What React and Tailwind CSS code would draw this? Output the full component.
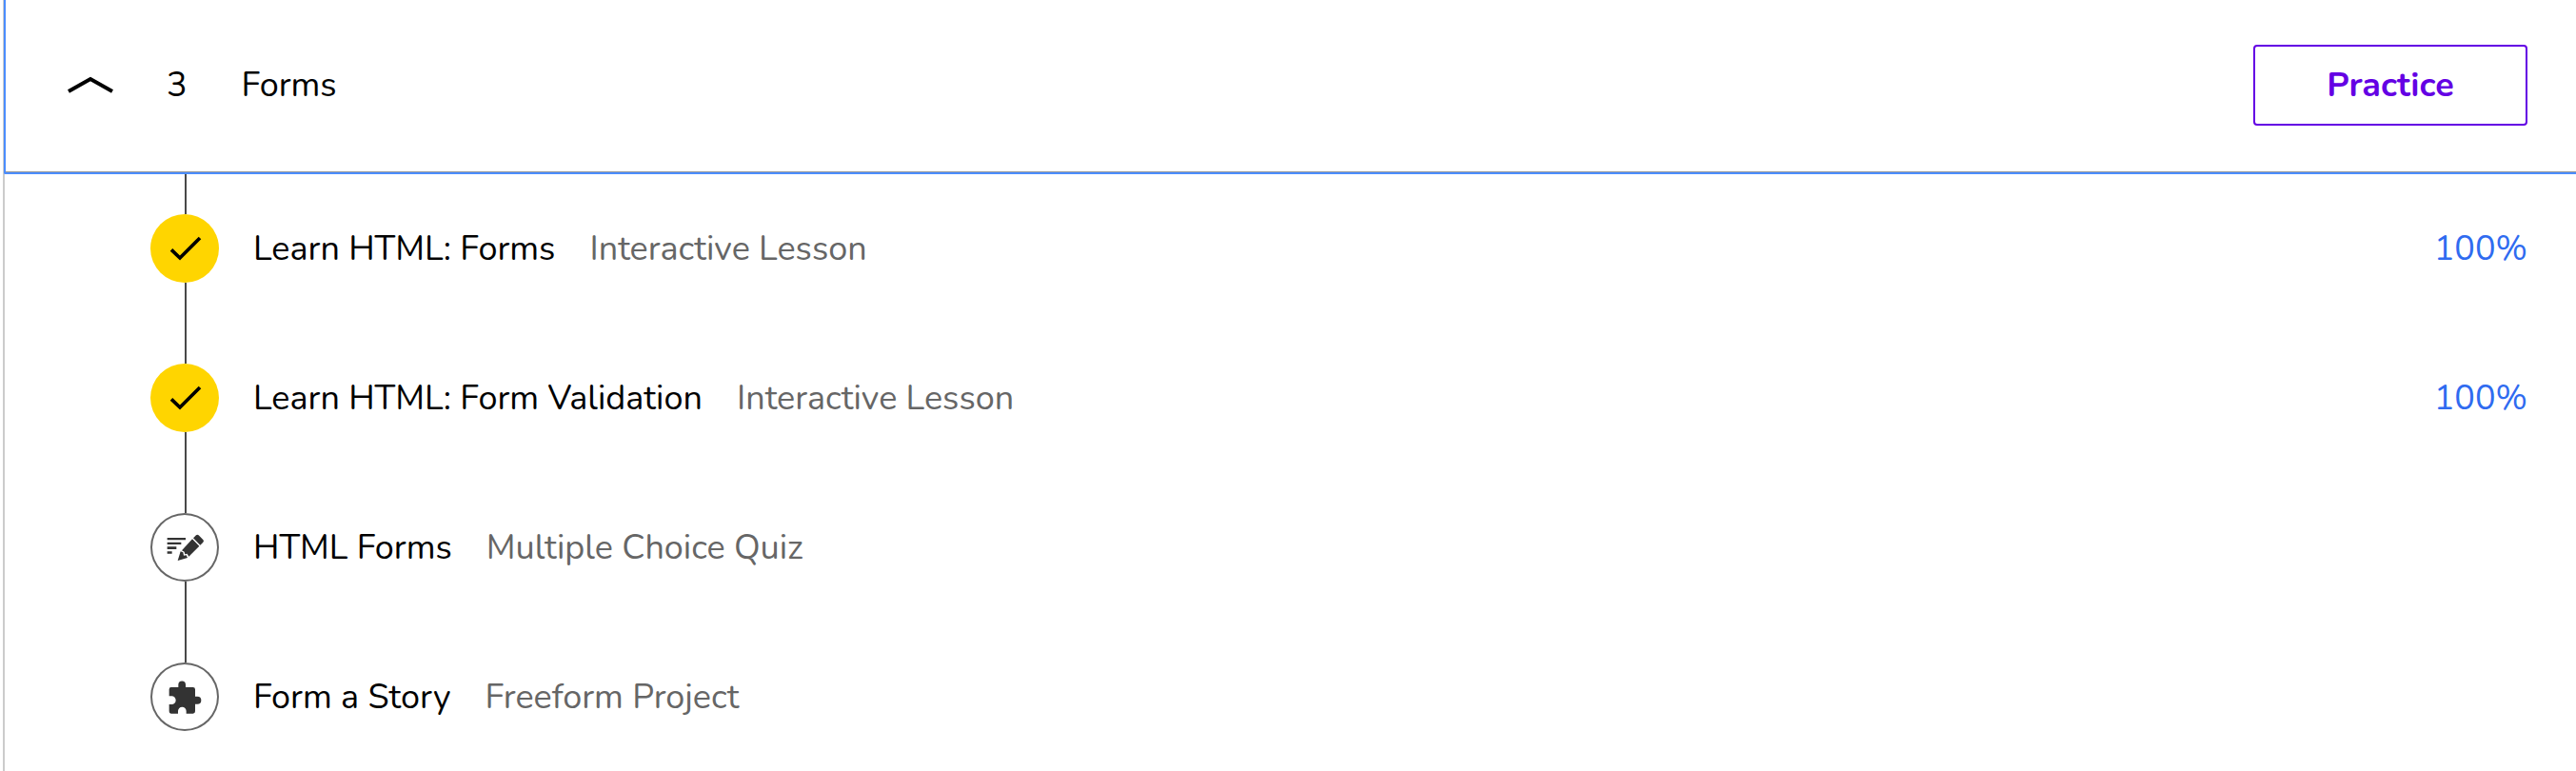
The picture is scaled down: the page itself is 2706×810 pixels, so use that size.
import React, { useState } from "react";

const lessons = [
  { title: "Learn HTML: Forms", kind: "Interactive Lesson", icon: "check", progress: "100%" },
  { title: "Learn HTML: Form Validation", kind: "Interactive Lesson", icon: "check", progress: "100%" },
  { title: "HTML Forms", kind: "Multiple Choice Quiz", icon: "quiz" },
  { title: "Form a Story", kind: "Freeform Project", icon: "project" },
];

function ChevronIcon({ open }) {
  return (
    <svg
      viewBox="0 0 48 20"
      className={open ? "h-5 w-12 shrink-0" : "h-5 w-12 shrink-0 rotate-180"}
      fill="none"
      stroke="currentColor"
      strokeWidth="4"
      aria-hidden="true"
    >
      <path d="M1 16 24 3 47 16" />
    </svg>
  );
}

function CheckIcon() {
  return (
    <svg viewBox="0 0 216 216" className="size-full" fill="none" stroke="#000" strokeWidth="11" aria-hidden="true">
      <path d="M66 112 93 138 156 75" />
    </svg>
  );
}

function QuizIcon() {
  return (
    <svg viewBox="0 0 216 216" className="size-full" fill="#333" aria-hidden="true">
      <path d="M53 78H111V85H53zM53 92H97V99H53zM53 106H82V114H53zM53 121H68V128H53z" />
      <path d="M144 70Q148 66 152 70L166 84Q170 88 166 92L157 101 135 79z" />
      <path d="M132 82 154 104 121 137 116 128 109 130 107 122 99 118z" />
      <path d="M95 121 103 124 105 134 113 133 117 141 86 150z" />
    </svg>
  );
}

function ProjectIcon() {
  return (
    <svg viewBox="0 0 216 216" className="size-full" fill="#333" aria-hidden="true">
      <path d="M65 78H88V70A11.500 11.500 0 0 1 111 70V78H134Q141 78 141 85V107H148A12 12 0 0 1 148 131H141V154Q141 161 134 161H113V153A13 13 0 0 0 87 153V161H65Q59 161 59 154V132H67A13 13 0 0 0 67 106H59V85Q59 78 65 78z" />
    </svg>
  );
}

function StatusBadge({ icon }) {
  if (icon === "check") {
    return (
      <span className="size-[72px] shrink-0 rounded-full bg-[#ffd500]">
        <CheckIcon />
      </span>
    );
  }
  return (
    <span className="size-[72px] shrink-0 rounded-full bg-white ring-2 ring-inset ring-[#666]">
      {icon === "quiz" ? <QuizIcon /> : <ProjectIcon />}
    </span>
  );
}

function LessonRow({ lesson, last }) {
  return (
    <li className="flex pr-[51px]">
      <div className="flex w-[72px] shrink-0 flex-col items-center">
        <span className="ml-[2px] h-[42px] w-[2px] bg-[#484848]" />
        <StatusBadge icon={lesson.icon} />
        <span className={last ? "ml-[2px] h-[43px] w-[2px]" : "ml-[2px] h-[43px] w-[2px] bg-[#484848]"} />
      </div>
      <a href="#" className="flex flex-1 items-center pl-9 leading-[48px]">
        <span className="text-black">{lesson.title}</span>
        <span className="ml-9 text-[#666]">{lesson.kind}</span>
        {lesson.progress && <span className="ml-auto text-[#2f6bf0]">{lesson.progress}</span>}
      </a>
    </li>
  );
}

export default function App() {
  const [open, setOpen] = useState(true);
  return (
    <section className="ml-[3px] min-h-screen border-l-2 border-[#ccc] bg-white font-['Nunito','Lato',sans-serif] text-[36px] text-black">
      <header className="-ml-px flex items-center rounded-bl-[2px] border-b-2 border-l-2 border-[#4b8dff] bg-white pr-[51px] pb-[2px] shadow-[inset_0_-1px_0_#999]">
        <button
          type="button"
          aria-expanded={open}
          onClick={() => setOpen(!open)}
          className="flex flex-1 items-center py-[65px] pl-[65px] text-left leading-[49px]"
        >
          <ChevronIcon open={open} />
          <span className="ml-14">3</span>
          <span className="ml-[57px]">Forms</span>
        </button>
        <button
          type="button"
          className="h-[85px] w-72 rounded-[4px] border-2 border-[#6400e4] bg-white text-center font-bold text-[#6400e4]"
        >
          Practice
        </button>
      </header>
      {open && (
        <ul className="ml-[153px]">
          {lessons.map((lesson, i) => (
            <LessonRow key={lesson.title} lesson={lesson} last={i === lessons.length - 1} />
          ))}
        </ul>
      )}
    </section>
  );
}
